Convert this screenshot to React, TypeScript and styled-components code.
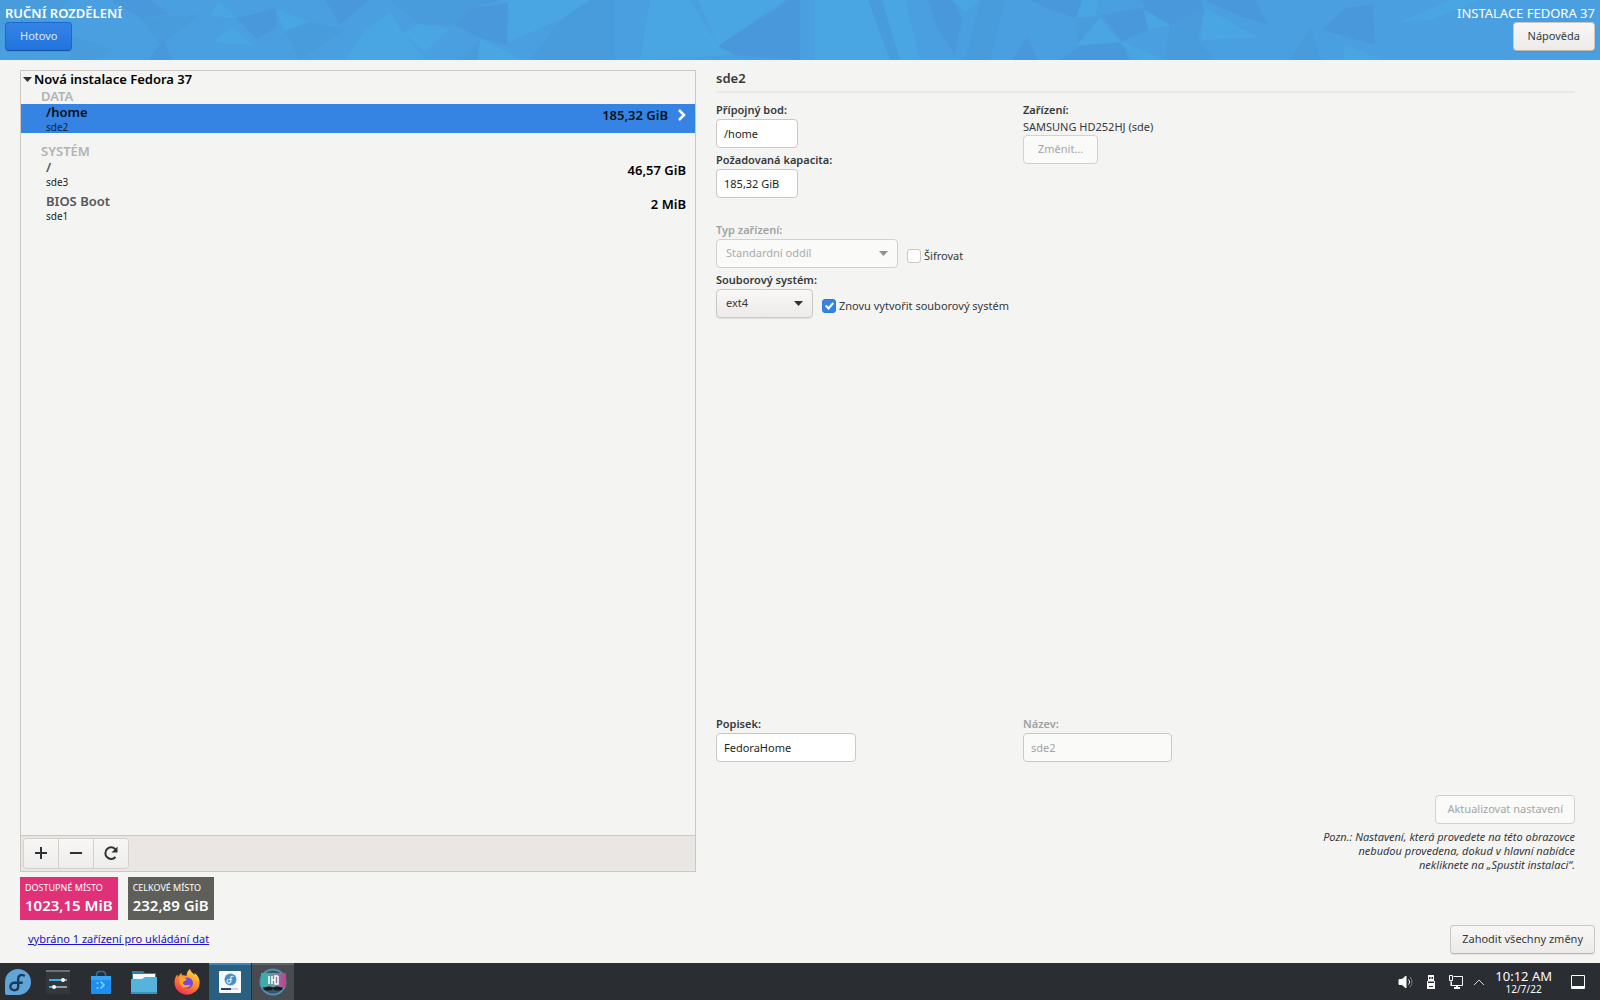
import React from "react";
import styled, { createGlobalStyle, css } from "styled-components";

const GlobalStyle = createGlobalStyle`
  *, *::before, *::after { box-sizing: border-box; }
  body {
    margin: 0;
    background: #f4f4f3;
    color: #34393b;
    font-family: "Noto Sans", "Open Sans", sans-serif;
    font-size: 11px;
    line-height: 16px;
  }
  button, input, select { font: inherit; color: inherit; margin: 0; }
`;

const Screen = styled.div`
  display: flex;
  flex-direction: column;
  min-height: 100vh;
`;

/* ---------- header ---------- */

const Header = styled.header`
  position: relative;
  display: flex;
  justify-content: space-between;
  height: 60px;
  padding: 4px 5px 0;
  background: #4a9fe0;
  overflow: hidden;
`;

const Pattern = styled.svg`
  position: absolute;
  inset: 0;
  width: 100%;
  height: 100%;
`;

const HeaderSide = styled.div<{ $end?: boolean }>`
  position: relative;
  display: flex;
  flex-direction: column;
  align-items: ${(p) => (p.$end ? "flex-end" : "flex-start")};
  color: #fff;
`;

const ScreenTitle = styled.h1<{ $bold?: boolean }>`
  margin: 0;
  font-size: 13px;
  line-height: 18px;
  font-weight: ${(p) => (p.$bold ? 600 : 400)};
`;

const Button = styled.button<{ $primary?: boolean; $wide?: boolean }>`
  height: 29px;
  padding: 0 ${(p) => (p.$wide ? 11 : 14)}px 2px;
  border: 1px solid #cdc7c2;
  border-bottom-color: #bfb8b1;
  border-radius: 4px;
  background: linear-gradient(#f8f7f6, #edebe9);
  box-shadow: 0 1px 1px rgba(0, 0, 0, 0.07);
  color: #34393b;
  white-space: nowrap;

  ${(p) =>
    p.$primary &&
    css`
      border-color: #1b6acb;
      border-bottom-color: #15539e;
      background: linear-gradient(#3583e6, #2174de);
      color: #dce9fa;
    `}

  &:disabled {
    border-color: #d5d0cc;
    background: #fafaf9;
    box-shadow: none;
    color: #a4a6a6;
  }
`;

/* ---------- main ---------- */

const Main = styled.main`
  flex: 1;
  display: grid;
  grid-template-columns: 676fr 859fr;
  gap: 20px;
  padding: 10px 25px 0 20px;
`;

const TreePanel = styled.section`
  display: flex;
  flex-direction: column;
  border: 1px solid #cdc7c2;
`;

const Tree = styled.div`
  flex: 1;
`;

const TreeRoot = styled.h2`
  display: flex;
  align-items: center;
  gap: 2px;
  margin: 0;
  padding-left: 2px;
  font-size: 13px;
  line-height: 17px;
  font-weight: 600;
  color: #000;
`;

const GroupName = styled.h3`
  margin: 0;
  padding-left: 20px;
  font-size: 13px;
  line-height: 16px;
  font-weight: 600;
  color: #b2b3b2;
`;

const Group = styled.div`
  margin-bottom: 10px;
`;

const MountRow = styled.button<{ $selected?: boolean }>`
  display: grid;
  grid-template-columns: 1fr auto ${(p) => (p.$selected ? 23 : 5)}px;
  align-items: center;
  width: 100%;
  height: 29px;
  margin-bottom: 5px;
  padding: 0 4px 0 25px;
  border: 0;
  background: ${(p) => (p.$selected ? "#3584e4" : "transparent")};
  color: ${(p) => (p.$selected ? "#06101c" : "#000")};
  text-align: left;
`;

const MountText = styled.span<{ $selected?: boolean }>`
  display: flex;
  flex-direction: column;
  font-size: 13px;
  line-height: 17px;
  font-weight: 600;
  color: ${(p) => (p.$selected ? "#06101c" : "#555759")};

  small {
    font-size: 10px;
    line-height: 12px;
    font-weight: 400;
    color: ${(p) => (p.$selected ? "#0c2340" : "#222")};
  }
`;

const Capacity = styled.span`
  align-self: start;
  padding-top: 3px;
  font-size: 13px;
  font-weight: 600;
`;

const Chevron = styled.svg`
  width: 8px;
  height: 12px;
  justify-self: end;
  align-self: start;
  margin: 5px 5px 0 0;
`;

const Toolbar = styled.div`
  display: flex;
  padding: 2px;
  border-top: 1px solid #cdc7c2;
  background: #eae6e3;
`;

const ToolGroup = styled.div`
  display: flex;
  border: 1px solid #d5d0cc;
  border-radius: 4px;
  overflow: hidden;
`;

const ToolButton = styled.button`
  display: grid;
  place-items: center;
  width: 34px;
  height: 29px;
  padding: 0 0 1px;
  border: 0;
  background: linear-gradient(#f8f7f6, #efedeb);

  & + & {
    width: 35px;
    border-left: 1px solid #d5d0cc;
  }
`;

/* ---------- details ---------- */

const Details = styled.section`
  display: flex;
  flex-direction: column;
`;

const DetailsTitle = styled.h2`
  margin: 0 0 9px;
  padding-bottom: 5px;
  border-bottom: 2px solid #eae9e8;
  font-size: 13px;
  line-height: 16px;
  font-weight: 600;
`;

const Columns = styled.div`
  display: grid;
  grid-template-columns: 307fr 552fr;
  margin-bottom: 24px;
`;

const Stack = styled.div`
  display: flex;
  flex-direction: column;
  align-items: flex-start;
  gap: 4px;
`;

const Field = styled.div`
  display: flex;
  flex-direction: column;
  align-items: flex-start;
`;

const labelText = css`
  margin-bottom: 1px;
  font-weight: 600;
  line-height: 16px;
`;

const FieldLabel = styled.label<{ $disabled?: boolean }>`
  ${labelText}
  color: ${(p) => (p.$disabled ? "#a0a2a2" : "#34393b")};
`;

const Caption = styled.div`
  ${labelText}
`;

const TextInput = styled.input<{ $width: number }>`
  width: ${(p) => p.$width}px;
  height: 29px;
  padding: 0 7px 1px;
  border: 1px solid #cdc7c2;
  border-radius: 4px;
  background: #fff;
  color: #1c1f20;

  &:disabled {
    background: #fafaf9;
    color: #a0a2a2;
  }
`;

const Combo = styled.div`
  display: grid;
  align-items: center;

  & > * {
    grid-area: 1 / 1;
  }

  svg {
    justify-self: end;
    margin-right: 10px;
    pointer-events: none;
  }
`;

const Select = styled.select<{ $width: number }>`
  appearance: none;
  width: ${(p) => p.$width}px;
  height: 29px;
  padding: 0 9px 1px;
  border: 1px solid #cdc7c2;
  border-radius: 4px;
  background: linear-gradient(#f8f7f6, #edebe9);
  box-shadow: 0 1px 1px rgba(0, 0, 0, 0.08);

  &:disabled {
    border-color: #d5d0cc;
    background: #fafaf9;
    box-shadow: none;
    color: #a9abab;
    opacity: 1;
  }
`;

const ComboLine = styled.div`
  display: flex;
  align-items: center;
  gap: 9px;
`;

const CheckLabel = styled.label`
  display: flex;
  align-items: center;
  gap: 3px;
  padding-top: 4px;
`;

const CheckBox = styled.input`
  appearance: none;
  display: grid;
  place-items: center;
  width: 14px;
  height: 14px;
  border: 1px solid #cdc7c2;
  border-radius: 3px;
  background: #fff;

  &:checked {
    border-color: #2b7adb;
    background: #3584e4;
  }

  &:checked::after {
    content: "";
    width: 5px;
    height: 8px;
    margin-bottom: 2px;
    border: solid #fff;
    border-width: 0 2px 2px 0;
    transform: rotate(42deg);
  }
`;

const Spacer = styled.div`
  flex: 1;
`;

const Apply = styled.div`
  display: flex;
  flex-direction: column;
  align-items: flex-end;
  gap: 6px;
  padding-top: 9px;
`;

const Note = styled.p`
  width: 264px;
  margin: 0;
  font-style: italic;
  line-height: 14px;
  text-align: right;
`;

/* ---------- footer ---------- */

const Summary = styled.section`
  display: flex;
  gap: 10px;
  padding: 5px 20px;
`;

const SpaceBox = styled.div<{ $color: string }>`
  padding: 3px 5px 6px;
  background: ${(p) => p.$color};
  color: #fff;
  font-size: 9px;
  line-height: 16px;

  strong {
    display: block;
    font-size: 15px;
    line-height: 18px;
    font-weight: 600;
  }
`;

const Footer = styled.footer`
  display: flex;
  align-items: center;
  justify-content: space-between;
  padding: 0 5px 9px 28px;

  a {
    padding-bottom: 2px;
    color: #1b10c8;
  }
`;

/* ---------- task bar ---------- */

const Taskbar = styled.nav`
  display: flex;
  justify-content: space-between;
  height: 37px;
  background: #2a2e32;
  color: #fcfcfc;
`;

const Tasks = styled.div`
  display: flex;
  gap: 1px;
`;

const Task = styled.button<{ $tone?: string; $line?: string; $narrow?: boolean }>`
  display: grid;
  place-items: center;
  width: ${(p) => (p.$narrow ? 36 : 42)}px;
  padding: 0 0 2px;
  border: 0;
  border-top: 2px solid ${(p) => p.$line ?? "transparent"};
  background: ${(p) => p.$tone ?? "transparent"};
`;

const Tray = styled.div`
  display: flex;
  align-items: center;
  gap: 9px;
  padding-right: 14px;
`;

const Clock = styled.time`
  padding: 0 9px 0 1px;
  font-size: 13px;
  line-height: 14px;
  text-align: center;

  small {
    display: block;
    font-size: 10px;
    line-height: 12px;
  }
`;

const L = "#4aafe4";
const D = "#4a90d5";
const M = "#4a98d8";

const shards: [string, string][] = [
  [L, "218,0 237,18 211,16"],
  [L, "231,27 253,45 213,43"],
  [D, "237,18 276,8 277,27 257,39"],
  [L, "275,9 310,22 285,31"],
  [M, "285,31 310,22 345,30 300,60"],
  [D, "325,0 370,0 340,24"],
  [M, "0,0 70,0 50,22 0,30"],
  [M, "72,36 115,50 92,60 70,60"],
  [D, "110,0 150,0 170,14 140,18"],
  [M, "140,18 200,15 160,45"],
  [D, "164,40 172,60 148,60"],
  [L, "345,60 365,30 390,12 403,33 425,60"],
  [M, "390,0 500,0 475,8 455,25 418,24"],
  [D, "455,25 475,8 508,3 507,45 480,38"],
  [L, "480,38 522,60 478,60"],
  [L, "403,33 418,24 450,28 425,52"],
  [M, "463,60 480,38 478,60"],
  [L, "500,0 590,0 560,20 508,42 508,3"],
  [M, "560,20 590,0 615,0 615,60 530,60"],
  [L, "650,0 690,0 718,45 735,55 640,60"],
  [L, "698,0 785,0 718,46"],
  [D, "718,46 790,0 800,0 800,60 735,55"],
  [L, "815,0 868,0 890,60 815,60"],
  [M, "868,0 882,0 900,60 890,60"],
  [L, "882,0 905,0 920,60 900,60"],
  [D, "928,0 952,0 962,20 955,55 938,30"],
  [L, "952,0 980,0 965,12"],
  [M, "980,0 1005,0 990,60 965,60"],
  [D, "1030,0 1082,0 1076,18 1050,10"],
  [L, "1082,0 1097,0 1096,15 1076,18"],
  [M, "1076,18 1099,18 1078,44"],
  [D, "1027,37 1038,60 1012,60"],
  [L, "1100,18 1120,42 1077,45"],
  [D, "1101,15 1143,8 1148,30 1122,41"],
  [D, "1142,0 1200,0 1204,10 1170,25 1145,10"],
  [L, "1145,10 1170,25 1148,30"],
  [D, "1080,46 1120,43 1140,60 1060,60"],
  [L, "1122,42 1165,60 1130,60"],
  [M, "1170,25 1204,10 1198,40 1215,60 1165,60"],
  [L, "1205,8 1260,38 1200,40"],
  [D, "1205,0 1255,0 1268,25 1240,16"],
  [M, "1290,60 1310,28 1322,60"],
  [D, "1322,30 1345,8 1373,4 1375,45"],
  [L, "1345,45 1382,60 1343,60"],
  [L, "1400,22 1450,0 1480,0 1430,20"],
];

const Arrow = ({ color }: { color: string }) => (
  <svg width="9" height="5" viewBox="0 0 9 5" aria-hidden="true">
    <path d="M0 0h9L4.500 5z" fill={color} />
  </svg>
);

interface Mount {
  name: string;
  device: string;
  size: string;
  selected?: boolean;
}

const groups: { name: string; mounts: Mount[] }[] = [
  { name: "DATA", mounts: [{ name: "/home", device: "sde2", size: "185,32 GiB", selected: true }] },
  {
    name: "SYSTÉM",
    mounts: [
      { name: "/", device: "sde3", size: "46,57 GiB" },
      { name: "BIOS Boot", device: "sde1", size: "2 MiB" },
    ],
  },
];

const FedoraIcon = ({ size }: { size: number }) => (
  <svg width={size} height={size} viewBox="0 0 26 26" aria-hidden="true">
    <path d="M13 0a13 13 0 1 1 0 26H2a2 2 0 0 1-2-2V13A13 13 0 0 1 13 0z" fill="#60a5da" />
    <path
      d="M19 6.500c-3-1.500-5.800 0-5.800 3.300v7.400c0 2.600-1.700 4-3.900 4-2.400 0-3.900-1.700-3.900-3.700s1.600-3.700 3.900-3.700h7.500"
      fill="none"
      stroke="#1f3a56"
      strokeWidth="2.400"
      strokeLinecap="round"
    />
  </svg>
);

const SettingsIcon = () => (
  <svg width="24" height="24" viewBox="0 0 24 24" aria-hidden="true">
    <rect width="24" height="24" fill="#33373b" />
    <rect width="24" height="2" fill="#6c7175" />
    <path d="M3 10h18M3 17h18" stroke="#b9bec2" strokeWidth="1.500" />
    <path d="M3 10h13" stroke="#3daee9" strokeWidth="2" />
    <path d="M3 17h5" stroke="#3daee9" strokeWidth="2" />
    <circle cx="17" cy="10" r="2" fill="#fff" />
    <circle cx="8" cy="17" r="2" fill="#fff" />
  </svg>
);

const StoreIcon = () => (
  <svg width="22" height="24" viewBox="0 0 22 24" aria-hidden="true">
    <path d="M6.500 7V4.500A3 3 0 0 1 9.500 1.500h3a3 3 0 0 1 3 3V7" fill="none" stroke="#2d6fa0" strokeWidth="1.500" />
    <rect x="1" y="6" width="20" height="18" rx="1" fill="#1c8ff0" />
    <rect x="1" y="6" width="20" height="4" fill="#35a6f5" />
    <path d="M10.500 11.500l3.500 3.500-3.500 3.500" fill="none" stroke="#8ad2fb" strokeWidth="1.500" />
    <circle cx="7.500" cy="13" r="1" fill="#8ad2fb" />
    <circle cx="7.500" cy="18" r="1" fill="#8ad2fb" />
  </svg>
);

const FolderIcon = () => (
  <svg width="26" height="24" viewBox="0 0 26 24" aria-hidden="true">
    <path d="M1 1h11l2 2h11v8H1z" fill="#2f7fa8" />
    <path d="M2 4h22v6H2z" fill="#f5fafc" />
    <path d="M0 9h11l3-2h12v17H0z" fill="#55b3dc" />
    <path d="M0 22h26v2H0z" fill="#3c94bd" />
  </svg>
);

const FirefoxIcon = () => (
  <svg width="26" height="26" viewBox="0 0 26 26" aria-hidden="true">
    <defs>
      <linearGradient id="flame" x1="0.800" y1="0" x2="0.250" y2="1">
        <stop offset="0" stopColor="#ffe23c" />
        <stop offset="0.450" stopColor="#ff9328" />
        <stop offset="1" stopColor="#f5275c" />
      </linearGradient>
    </defs>
    <path
      d="M16 0c.4 2.500 3 4 4.500 6 .2-.8.1-1.600 0-2.300C24 6.500 26 10 25.600 14.500A12.600 12.600 0 0 1 .5 14C.3 10 1.700 7.500 3.300 5.300L3.800 8l3.500-4.200.7 2.600c2-.3 3.500.1 4.500.8C12.500 4.500 13.500 1.500 16 0z"
      fill="url(#flame)"
    />
    <circle cx="13.500" cy="14" r="5.500" fill="#7a48d8" />
    <path d="M6 8.500c2.500-.8 5 .3 6.800 2.200L10 12.500c-1.500.5-1.500 2.500.5 3.500 2 .8 4-.2 6-.3-2 3.500-7 3.800-9.200 1.200C5 14.500 5 11 6 8.500z" fill="#ffa52e" />
  </svg>
);

const InstallerIcon = () => (
  <svg width="24" height="24" viewBox="0 0 24 24" aria-hidden="true">
    <rect x="1" y="1" width="22" height="22" rx="1" fill="#f6f8fa" />
    <circle cx="12.500" cy="9.500" r="6" fill="#4a90c4" />
    <path
      d="M15.500 6.500c-1.800-.7-2.700.2-2.700 1.600v3c0 1.300-.9 2-1.900 2-1.200 0-1.900-.8-1.900-1.800s.8-1.800 1.900-1.800h3.300"
      fill="none"
      stroke="#dcebf5"
      strokeWidth="1.200"
    />
    <path d="M3 19h10" stroke="#28456e" strokeWidth="2" />
    <path d="M13 19h7" stroke="#c5ccd2" strokeWidth="1.500" />
  </svg>
);

const MediaIcon = () => (
  <svg width="28" height="28" viewBox="0 0 28 28" aria-hidden="true">
    <defs>
      <linearGradient id="screen" x1="0" x2="1">
        <stop offset="0" stopColor="#28b8a8" />
        <stop offset="0.500" stopColor="#6f93a0" />
        <stop offset="1" stopColor="#c83c8c" />
      </linearGradient>
    </defs>
    <circle cx="14" cy="14" r="12.500" fill="#3b5566" stroke="#4f8fb5" strokeWidth="2" />
    <rect x="2" y="5" width="25" height="14" rx="1" fill="url(#screen)" />
    <path d="M10 8v8M13 8v8M13 12h3M19 8h-3v8h3V8" stroke="#fff" strokeWidth="1.500" fill="none" />
    <path d="M4 21c3-3 7-3 10-1 3-2 7-2 10 1-3 2-7 2-10 0-3 2-7 2-10 0z" fill="#15191c" />
  </svg>
);

const SpeakerIcon = () => (
  <svg width="16" height="16" viewBox="0 0 16 16" fill="none" stroke="#fcfcfc" aria-hidden="true">
    <path d="M1 5.500h3L8 2v12l-4-3.500H1z" fill="#fcfcfc" />
    <path d="M10.500 5.500c1.300 1.300 1.300 3.700 0 5" />
    <path d="M12 3c2.500 2.500 2.500 7.500 0 10" stroke="#7d8285" />
  </svg>
);

const UsbIcon = () => (
  <svg width="16" height="16" viewBox="0 0 16 16" aria-hidden="true">
    <path d="M5 1h6v6h1v8H4V7h1z" fill="#fcfcfc" />
    <path d="M6 3h1.500v2H6zM8.500 3H10v2H8.500zM5 7.500h6V9H5zM6 12h4v1H6z" fill="#2a2e32" />
  </svg>
);

const NetworkIcon = () => (
  <svg width="16" height="16" viewBox="0 0 16 16" fill="none" stroke="#fcfcfc" aria-hidden="true">
    <path d="M5.500 2.500h9v9h-11V8" />
    <path d="M1.500 1.500h3v5h-3zM3 6.500V12" />
    <path d="M6 14h6M9 11.500V14" strokeWidth="2" />
  </svg>
);

const CaretUpIcon = () => (
  <svg width="12" height="16" viewBox="0 0 12 16" fill="none" stroke="#d5d7d8" aria-hidden="true">
    <path d="M1 11l5-5 5 5" />
  </svg>
);

const DesktopIcon = () => (
  <svg width="16" height="16" viewBox="0 0 16 16" fill="none" stroke="#fcfcfc" aria-hidden="true">
    <path d="M1.500 1.500h13v13h-13z" />
    <path d="M1 13h14" strokeWidth="2" />
  </svg>
);

export default function App() {
  return (
    <Screen>
      <GlobalStyle />
      <Header>
        <Pattern viewBox="0 0 1600 60" preserveAspectRatio="none" aria-hidden="true">
          {shards.map(([fill, points]) => (
            <polygon key={points} points={points} fill={fill} opacity="0.450" />
          ))}
        </Pattern>
        <HeaderSide>
          <ScreenTitle $bold>RUČNÍ ROZDĚLENÍ</ScreenTitle>
          <Button $primary>Hotovo</Button>
        </HeaderSide>
        <HeaderSide $end>
          <ScreenTitle as="div">INSTALACE FEDORA 37</ScreenTitle>
          <Button>Nápověda</Button>
        </HeaderSide>
      </Header>

      <Main>
        <TreePanel>
          <Tree>
            <TreeRoot>
              <Arrow color="#2e3436" />
              Nová instalace Fedora 37
            </TreeRoot>
            {groups.map((group) => (
              <Group key={group.name}>
                <GroupName>{group.name}</GroupName>
                {group.mounts.map((mount) => (
                  <MountRow key={mount.device} $selected={mount.selected}>
                    <MountText $selected={mount.selected}>
                      {mount.name}
                      <small>{mount.device}</small>
                    </MountText>
                    <Capacity>{mount.size}</Capacity>
                    {mount.selected && (
                      <Chevron viewBox="0 0 8 12" aria-hidden="true">
                        <path d="M1 1l5 5-5 5" fill="none" stroke="#fff" strokeWidth="2.500" />
                      </Chevron>
                    )}
                  </MountRow>
                ))}
              </Group>
            ))}
          </Tree>
          <Toolbar>
            <ToolGroup>
              <ToolButton aria-label="Přidat">
                <svg width="12" height="12" viewBox="0 0 12 12" stroke="#2e3436" strokeWidth="2">
                  <path d="M0 6h12M6 0v12" />
                </svg>
              </ToolButton>
              <ToolButton aria-label="Odebrat">
                <svg width="12" height="12" viewBox="0 0 12 12" stroke="#2e3436" strokeWidth="2">
                  <path d="M0 6h12" />
                </svg>
              </ToolButton>
              <ToolButton aria-label="Znovu načíst">
                <svg width="16" height="16" viewBox="0 0 16 16" fill="none" stroke="#2e3436" strokeWidth="2">
                  <path d="M12.500 12A5.800 5.800 0 1 1 12.500 4.300" />
                  <path d="M14.500 1.500v6H8.500z" fill="#2e3436" stroke="none" />
                </svg>
              </ToolButton>
            </ToolGroup>
          </Toolbar>
        </TreePanel>

        <Details>
          <DetailsTitle>sde2</DetailsTitle>
          <Columns>
            <Stack>
              <Field>
                <FieldLabel htmlFor="mount">Přípojný bod:</FieldLabel>
                <TextInput id="mount" $width={82} defaultValue="/home" />
              </Field>
              <Field>
                <FieldLabel htmlFor="capacity">Požadovaná kapacita:</FieldLabel>
                <TextInput id="capacity" $width={82} defaultValue="185,32 GiB" />
              </Field>
            </Stack>
            <Field>
              <Caption>Zařízení:</Caption>
              <div>SAMSUNG HD252HJ (sde)</div>
              <Button disabled>Změnit…</Button>
            </Field>
          </Columns>
          <Stack>
            <Field>
              <FieldLabel htmlFor="type" $disabled>Typ zařízení:</FieldLabel>
              <ComboLine>
                <Combo>
                  <Select id="type" $width={182} disabled>
                    <option>Standardní oddíl</option>
                  </Select>
                  <Arrow color="#8f9192" />
                </Combo>
                <CheckLabel>
                  <CheckBox type="checkbox" />
                  Šifrovat
                </CheckLabel>
              </ComboLine>
            </Field>
            <Field>
              <FieldLabel htmlFor="filesystem">Souborový systém:</FieldLabel>
              <ComboLine>
                <Combo>
                  <Select id="filesystem" $width={97}>
                    <option>ext4</option>
                  </Select>
                  <Arrow color="#2e3436" />
                </Combo>
                <CheckLabel>
                  <CheckBox type="checkbox" defaultChecked />
                  Znovu vytvořit souborový systém
                </CheckLabel>
              </ComboLine>
            </Field>
          </Stack>
          <Spacer />
          <Columns>
            <Field>
              <FieldLabel htmlFor="label">Popisek:</FieldLabel>
              <TextInput id="label" $width={140} defaultValue="FedoraHome" />
            </Field>
            <Field>
              <FieldLabel htmlFor="name" $disabled>Název:</FieldLabel>
              <TextInput id="name" $width={149} defaultValue="sde2" disabled />
            </Field>
          </Columns>
          <Apply>
            <Button $wide disabled>Aktualizovat nastavení</Button>
            <Note>
              Pozn.: Nastavení, která provedete na této obrazovce nebudou provedena, dokud v hlavní nabídce nekliknete
              na „Spustit instalaci“.
            </Note>
          </Apply>
        </Details>
      </Main>

      <Summary>
        <SpaceBox $color="#df3078">
          DOSTUPNÉ MÍSTO
          <strong>1023,15 MiB</strong>
        </SpaceBox>
        <SpaceBox $color="#5e5f59">
          CELKOVÉ MÍSTO
          <strong>232,89 GiB</strong>
        </SpaceBox>
      </Summary>

      <Footer>
        <a href="#disks">vybráno 1 zařízení pro ukládání dat</a>
        <Button $wide>Zahodit všechny změny</Button>
      </Footer>

      <Taskbar>
        <Tasks>
          <Task $narrow aria-label="Fedora"><FedoraIcon size={26} /></Task>
          <Task aria-label="Nastavení"><SettingsIcon /></Task>
          <Task aria-label="Discover"><StoreIcon /></Task>
          <Task aria-label="Soubory"><FolderIcon /></Task>
          <Task aria-label="Firefox"><FirefoxIcon /></Task>
          <Task aria-label="Instalace" $tone="#2b5f80" $line="#3d88b8"><InstallerIcon /></Task>
          <Task aria-label="Média" $tone="#484b4f" $line="#5f6265"><MediaIcon /></Task>
        </Tasks>
        <Tray>
          <SpeakerIcon />
          <UsbIcon />
          <NetworkIcon />
          <CaretUpIcon />
          <Clock>
            10:12 AM
            <small>12/7/22</small>
          </Clock>
          <DesktopIcon />
        </Tray>
      </Taskbar>
    </Screen>
  );
}
